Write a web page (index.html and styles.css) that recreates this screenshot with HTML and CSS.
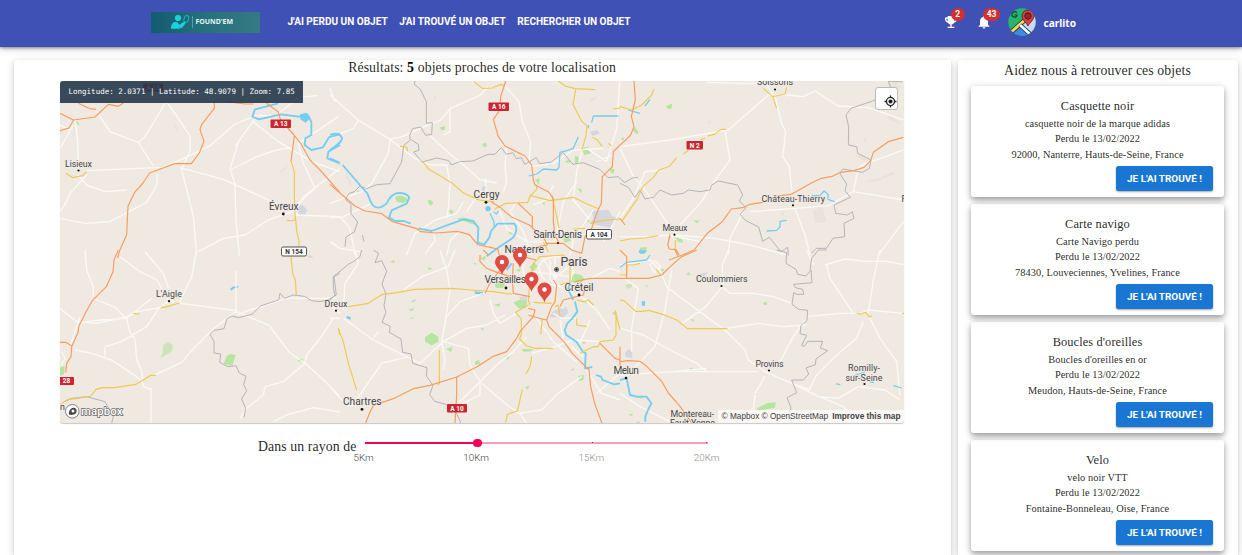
FILE: index.html
```html
<!DOCTYPE html>
<html lang="fr">
<head>
<meta charset="utf-8">
<title>Found'em</title>
<link rel="stylesheet" href="styles.css">
</head>
<body>
<header class="topbar">
  <a class="logo">
    <svg class="logo-mark" viewBox="0 0 20 16" width="20" height="16"><g fill="#19d3dc"><circle cx="8" cy="4" r="3.1"/><path d="M1 14.7C1 9 4 7.500 7 8l2.500 2.700 3.300-2.400 2.800 1-3.500 4.500H9l1.500.900z"/></g><ellipse cx="16.300" cy="5" rx="2.300" ry="3.500" transform="rotate(20 16.300 5)" fill="none" stroke="#19b5c2"/><path d="m14.800 8-2 3" stroke="#19d3dc" stroke-width="1.500"/></svg>
    <span class="logo-text">FOUND'EM</span>
  </a>
  <nav class="nav"><a>J'AI PERDU UN OBJET</a><a>J'AI TROUVÉ UN OBJET</a><a>RECHERCHER UN OBJET</a></nav>
  <div class="user">
    <span class="icon-btn"><svg viewBox="0 0 24 24" width="16" height="16" fill="#fff"><path d="M19 5h-2V3H7v2H5c-1.100 0-2 .900-2 2v1c0 2.550 1.920 4.630 4.390 4.940A5 5 0 0 0 11 15.900V19H7v2h10v-2h-4v-3.100a5 5 0 0 0 3.610-2.960C19.080 12.630 21 10.550 21 8V7c0-1.100-.900-2-2-2zM5 8V7h2v3.820C5.840 10.400 5 9.300 5 8zm14 0c0 1.300-.840 2.400-2 2.820V7h2z"/></svg><b class="badge">2</b></span>
    <span class="icon-btn bell"><svg viewBox="0 0 24 24" width="16" height="16" fill="#fff"><path d="M12 22c1.100 0 2-.900 2-2h-4c0 1.100.890 2 2 2zm6-6v-5c0-3.070-1.640-5.640-4.500-6.320V4a1.500 1.500 0 0 0-3 0v.680C7.630 5.360 6 7.920 6 11v5l-2 2v1h16v-1z"/></svg><b class="badge wide">43</b></span>
    <svg class="avatar" viewBox="0 0 28 28" width="28" height="28"><clipPath id="av"><circle cx="14" cy="14" r="13.700"/></clipPath><g clip-path="url(#av)"><path fill="#25b66d" d="M0 0h28v28H0z"/><path fill="#ced7f2" d="M28 8v20L14 16l7-5z"/><path fill="#3d8be8" d="m14 17 11 11H3z"/><path d="M1 26 18 11" stroke="#263238" stroke-width="4.600"/><path d="M1 26 18 11" stroke="#ffd65a" stroke-width="3"/><path d="m12 17 12 11" stroke="#263238" stroke-width="4.200"/><path d="m12 17 12 11" stroke="#f4f6ff" stroke-width="2.800"/><path d="M9 4.500C6 2.500 3 5 4 7.500s5 2 5-.500H6.500" fill="none" stroke="#143c35" stroke-width="1.200"/><path d="M20 18c-2-4-6-6-6-10a6 6 0 0 1 12 0c0 4-4 6-6 10z" fill="#e53b3b" stroke="#37232c" stroke-width=".8"/><circle cx="20" cy="8" r="3.200" fill="#a51f2b" stroke="#37232c"/></g></svg>
    <span class="username">carlito</span>
  </div>
</header>
<main class="page">
  <section class="panel results">
    <p class="heading">Résultats: <b>5</b> objets proches de votre localisation</p>
    <div class="map">
      <svg class="tiles" viewBox="60 81 844 342" width="844" height="342">
        <!-- parks, towns and lakes -->
        <g transform="translate(50 75) scale(.33333)"><path class="p" d="m76 138 8 3 5 10-7-3z"/><path class="t" d="m742 395 15-8 15 20-8 12h-18z"/><path class="h" d="m370 152 9-3 5 25-5-6zM690 290l20-18v8l-15 15zM65 180l10-25-3 28z"/><path class="lake" d="m750 118 20-5 12 15-15 15-16-10z"/></g>
        <g transform="translate(330 75) scale(.33333)"><path class="p" d="m330 157 15-3v10l-12 2zM457 207l10-4 4 10-10 4zM292 377l10-3 9 10-10 8zM358 404l12 3-2 12-9-6zM735 243l10 2 3 16-13 5zM755 220l20-5 8 20-20 5zM706 258l15-4v8l-12 2zM840 280l14 2-4 14-9-4zM615 315l14-6-2 20zM637 383l8-5-2 14zM742 338l14 6-3 10zM770 430l10 5-4 9zM533 473l20-3-10 9zM700 490l18-3 5 10-18 7zM80 350l6-4 4 10zM195 365c20-8 35 3 40 10l-15 10-20-5zM380 432c20-8 45-4 60 20l-40-15zM475 516l10-3v10z"/><path class="t" d="m785 408 50-4 12 20 20 4-25 30-60-12 8-20zM780 170l20-5 10 10-22 8zM455 338l12-8 4 10-13 10zM650 262l18 3-8 8z"/><path class="h" d="m780 72 20-8-3 10-18 6zM310 70l8-8-1 18zM45 295l8 5 15 35-10-8z"/><circle class="lake" cx="474" cy="401" r="8"/></g>
        <g transform="translate(620 75) scale(.33333)"><path class="p" d="m137 94 20-8-3 15-8 2zM45 156l12 18-8 3-10-10zM3 190l10-3-4 12zM220 437l19-2-8 10zM165 487l20 6 5 10-15-2zM60 518l20-2v16l-20 6z"/><path class="h" d="m800 30 25-8 20 15-10 8zM800 130l15-10 30 30zM735 320l45-10 35-20 10 8-60 22zM580 410l25-20 15 50 20-5-20 5-35 5zM700 240l30 3 15 20zM480 415l15-10-5 20zM260 140l15-5-5 15zM500 75l8 4-6 9zM730 190l8-5-2 20z"/></g>
        <g transform="translate(50 250) scale(.33333)"><path class="p" d="m530 318 13-7 14 5-10 31-26-5zM30 352l14-3-2 24-12 5zM745 325l14 3-3 8-12-3z"/><path class="p2" d="m340 286 13-11 16 10-4 20-35 20 8-15z"/><path class="t" d="m770 20 11-5 12 11-10-3z"/><path class="lake" d="m540 117 8-7 15-2 3 4-16 4-5 6z"/></g>
        <g transform="translate(330 250) scale(.33333)"><path class="p" d="m285 261 20-13 20 12v16l-20 10-20-11zM348 297l20-7-5 17zM450 236l9-3 3 9zM435 334l12-4 4 12-15 3zM522 320l16-2-4 12zM575 297h35l-8 7-22 1zM585 412l13-5-4 12zM745 378l16-3v14l-15 4zM720 363l10-9 2 5zM755 273l14 5-8 5zM720 80l15-9 18 4 10 12-10 12-30-2zM495 101l16-8 15 10-8 11-20-1zM490 165l22-5-5 10zM550 158l30-14 12 10-6 21-20-1zM598 52l15-15 10 12-13 15zM180 35l13-5v10zM293 52l15 4-10 4zM450 25l18-7-5 14zM558 60l16-6-6 12zM845 188l15-3-4 12zM760 150l14 2-6 10zM240 155l18-8-5 9zM234 179l20-5-8 9zM238 205l18-4-13 6zM430 40l8-2v8z"/><path class="t" d="m668 185 20-12 12 5 8-10 7 20-17 15-40-2zM568 141l22-3 2 12-20 2z"/><path class="pink" d="m650 254 7-2v10zM540 478l14 4-12 2z"/><path class="lake" d="m50 197 13 5-2 8-11-5zM433 124l30 3-6 9-22-5z"/></g>
        <g transform="translate(620 250) scale(.33333)"><path class="p" d="m197 73 10-6 6 9zM430 158l9-3 3 9-10 1zM212 209l9-2v8zM207 356l10-3v10zM412 475l30-16 26-2-4 17-50 8zM115 60l18-4-5 10zM45 442l30-4-10 8zM25 493l15-2-5 8zM48 517l11-3v10z"/><path class="p2" d="m15 104 20-3 2 10-15 6zM75 107l10-3-3 9z"/><path class="t" d="m240 71 25-4-14 14zM15 307l12-10 10 10v18l-20-5z"/><path class="lake" d="m58 0 22 2-8 10-16-4zM65 154h10v13H66z"/></g>
        <!-- minor roads -->
        <g class="w" transform="translate(50 75) scale(.33333)"><path d="m75 135 8 60 2 88M30 220l40-70M110 287l230-10 80-35 60-30 75-65 62-25 60 0 70-55 55-5M110 300l-50 55-10 25-20 30M85 300l25 30 55 20 65-5M30 430l75 15 75-5 110-58 30-50 3-35M140 110l40 60 85 33 20-18 50-83 10-18M265 203l45 70M352 83l35 50 33 50v45l-25 55 35 140 10 117M390 278l130 35 110 50 115 55M615 132l-48 65-27 85 15 45 3 110 10 105M540 285l80-40 60-20 45-8M610 140l75 60 100 60 85 30M745 205l15 60 35 75-55 50M870 280l-110 85-20 40-85 30-70 45-65 10-75 40M735 420l135 5M30 150l30 15M745 205l120-80M570 195l-15 20"/></g>
        <g class="w" transform="translate(330 75) scale(.33333)"><path d="m0 60 85 75 90 55 80 60 45 20M0 40l15 40M85 135l-15 25-70 30M177 193l40-8 65-30 50-20 30-35 90-40 20-25M300 182l60 55 40 32 50 45 50 10M360 100v70l-20 10M180 195l-5 40-50 90-30 25-95 35M300 270h50l10 55-5 75-5 30M527 35l40 45 10 60 25 60-5 60M600 275l70-10 60-40 90-5M530 215l-5 60 5 45-10 30M400 380l-20 35-65 20-60 40-25 65M0 427l35 0 85-40M30 425l30 35 15 80M410 410l40-60 35 5M490 385l-20-30-5-45M560 380l-20 30 40 60 25 70M740 320l-40 60-25 120M790 405l-60 90-10 45M800 260l50-20M870 10l-10 150-30 100-60-40M755 230l-15 60-10 85 50 60M0 500l30 20 60 10M310 467l5 30-30 40M390 467l-30 30-10 45M510 410l20 50 60 40 80 0M670 330l-20 45-40 15M820 500l50-90"/></g>
        <g class="w" transform="translate(620 75) scale(.33333)"><path d="m0 215 150-20 175-30 120-105 55 0 50 5 35-17 70 45 90 5 100 35 50 5M260 22l180 5 20 35M465 65l20 80 12 25-9 75 20 30 8 75M315 165l15 90-55 75-30 50-65 70-15 30M0 220l38 80 40 50 85 125M165 480l120 10 105 20 110 30M370 410l-40 80-5 50M390 410l135-10 100-8 75-42 152 25M525 400l30 80 15 60M700 350l15-70 20-15 40-12 75-28M850 440l-60 80-15 20M0 430l40-60 35-80 45-5M0 485l90 0 60-5 90 20"/></g>
        <g class="w" transform="translate(50 250) scale(.33333)"><path d="m105 0 5 60 20 50v30M30 175l50 40 60 5 85-18 40-18 60-10 30-20M110 215l45-5 75-5 75-60M440 0l-15 80-38 80M390 160l170 22-70 55-70 70-25 30-85 40M558 183l0-120M210 20l60 45 50 25 35 60M285 5l55 65 30 90M553 182l105 45 60 80 50 35 50 45 50 50M850 205l-40 60-40 50-5 25-65 55-55 15-5 25-50 40-20 30M330 170l-40 60-75 45-50 15v35M75 300l50 10 60 20 60 40 28 20 10 22 20 5v103M255 268l5 60 15 35 3 25M135 147l60 25 35 35 10 40 15 20M35 305l10 20-10 20M60 290l30-90M670 515l40-20 80-22 80 13M600 180l110-35h150M560 195l50-20M870 190l-20-20"/></g>
        <g class="w" transform="translate(330 250) scale(.33333)"><path d="m40 180 5-80 40-60-10-40M40 205l90 65 100 50 40 20 70-65 70-40 60-10 55-30M130 265l15-20M0 410l35 40 30 20 90-130 80-20M330 0l20 60 10 60-15 100-10 55 10 55-5 30M375 0l-20 50-80 30-55 40M345 205l45-50 70-25 20-20M340 275l75 20 5 50 30 50 50-50 50-40 40-45M450 395l-65 65-25 15M455 400l70 60 40 30 70-10 50-50 70-50M450 395l0 40-70 35M570 490l30 45M605 310l70-20 55-20 90 5M620 205l50 70 70 60M0 205l30 0M690 210l10 60 60 50M560 190l-50 30-20-30-10-40M740 205l-45 0-25-15M605 0l-30 30 10 60 20 40M780 85l60-30 30 10M660 30l0 60 40 25 80 40M780 210l-30 70M770 360l45 70 55 20M800 430l70-60M740 130l60 50 40 60"/><path d="m625 50 15-20 35-12 40 10 15 35-10 35-35 12-35-12-18-25z"/><path d="M640 25l35 60 60-50M610 65l110 15M675 15v95"/></g>
        <g class="w" transform="translate(620 250) scale(.33333)"><path d="m0 45 90-15 30 30 20 50 85 65 90 65 60 60 10 30 50 35 80 35 55 20M325 0l-18 45v65l-50 60-70 50M310 115l20 15 70 0 60 10 55 20M560 200l100-10 60 0 25-10 105 10M320 235l95-15 75 10 70-5M555 210l-35 50-40 75M730 215l-20 50-60 50-60 60-25 50-70-35M565 425l30 15 60 5 60-35 80 10 45 30M750 205l30 60 50 70 10 100M620 45l10 40 70 105M615 45l60-18 65 7 60 0 50 10M780 0l-20 90-15 100M0 375l160-10 250 0M160 365l100-10M0 235l70 20 80 45 80 40 30 25M155 60l-20 120-30 110-60 60M5 80l50 35-20 120 0 70M560 0l20 45M405 430l30-50M400 480l5-45M90 45l15-13 17 18-20 18zM0 430l60 40 100 50M600 440l70 30 40 40"/></g>
        <!-- department borders -->
        <g class="b" transform="translate(330 75) scale(.33333)"><path d="m255 18-2 10 18 15 18 37v65l18-2-2 35-18 3-15-25-24 5-9 20 2 15-20 15-6 50-35 65-40 3-30 12-20-8-17 17-15 5-12 18 17 15v28l20 25-10 30-25 15-3 29m57-15-5-20M245 195l20 13 2 18-16 5 25 30 45-12 35 8 8 13 25-10 40-2 45-20h20l20-20 15 20 20-5 10 18 15-3 10 20 35-20 10 18 35-5 35-28 30 35 30-5 50 20 25 25 30-3 20 18 25-15 15 0"/></g>
        <g class="b" transform="translate(620 75) scale(.33333)"><path d="m0 325 25 12 20 30 15-22 15 27 25-5 20-22 35 15 35-5 15-10 35 5 30-5 5-15 20-12 58 12 15 30-10 18 20 20-17 20 15 18 40 20 12 43 20-12 35 43 20-13 2 25M850 20l-45 0 8 20-15 20-45 20-60 20-15 20 8 35-1 55 25 5 3 20 40 20-5 25-20 12-60-10-8 15 20 30-5 20 16 20-49 23 5 25 35 5 15-10 5 20-30 15 2 40-35 5-20 30h-30l-15 15"/></g>
        <g class="b" transform="translate(50 250) scale(.33333)"><path d="M870 70l-18 10 7 55-25 15-25 5-25-3-20-13-35-4-25 10-14-15-4 20-55 18-25 25-40 10-20-5-15 8-9 30-30 5-12 13 12 20v35l20 3-3 25 25 13 24-3 10 22 20 10-7 25 9 18-15 25 12 28-5 27M45 455l20-10 45-5 55 15 25 45-5 20"/></g>
        <g class="b" transform="translate(330 250) scale(.33333)"><path d="m130 0 16 10-11 28 20-6 15 32-14 38 12 30-6 35 6 20-12 30 25 12-3 18 35 20 5 40 25 5 5 28 43 13-2 25 20 28-10 28 15 20 30 8 30 15 17 38 2 30M95 0l-5 20-20 15-15 8-45 37 0 35 5 20-20 20"/></g>
        <g class="b" transform="translate(620 250) scale(.33333)"><path d="m470 0 30 8-2 32 30 18 5 15 25 5 15-18 3 38-55 5 5 10 22 5 3 15-20 0-10-5-5 35 20 15 27 3-2 30-18 15-3 25 20 5-15 30 8 3 10-15h45l-7 20 22 8-35 25-2 17-28 10 8 18-16 18h-35l15 38-29 15 12 30-8 25 10 20M620 0h-25l-20 25-5 35"/></g>
        <!-- water -->
        <g class="r" transform="translate(50 75) scale(.33333)"><path d="m685 85-70 18-8 22 20 8 65-15 55 7 25-5 12 20v40l-18 10-2 20 20 15 35-8 18-30 33-10M870 210l-35 20-3 20 38 15"/></g>
        <g class="r" transform="translate(330 75) scale(.33333)"><path d="M0 180c15-6 32-6 36 10 0 12-15 20-36 35M0 250l27 12M38 270l54 63 20 22 10 25c15 30 35 16 48 5 10-20 20-31 36-31 15 0 28 5 32 14l-8 18-45 20-8 22 20 10h25l20 8M265 460l40 8 95-35 30 5 15 20-2 45 20 5 15-20 5-20 20-22 50 0c12 15 5 30-5 43l-45 30-33 25"/><path class="thin" d="M480 415l12 25v15M490 410l10 7 5-10M865 123h-75l-5 20M775 150v10M745 185l-15 35-20 7-20 5-3 45-7 8-40-3-20 15-24 6"/></g>
        <g class="r thin" transform="translate(620 75) scale(.33333)"><path d="m75 93 15-20M25 105l35 10M575 362h25l12-14 12 10v15l20 7M500 436l-20 3v17l-10 10-30 2"/></g>
        <g class="r" transform="translate(330 250) scale(.33333)"><path d="m735 155 7 30-15 20-15 15-8 20 5 15 30 20 20 30 8 5-2 45 22-4M798 375l15 5 5 10 35 13 17-3M730 150l-15-30 5-25M545 40l-15 20"/></g>
        <g class="r" transform="translate(620 250) scale(.33333)"><path class="thin" d="M0 52l20-15 60-7 10-15"/><path d="M0 390l20-5 10 50 20 5 30 0 14 20-10 20-8 20v15"/><path class="thin" d="m648 402 13 2M700 378l35-12M750 396l12 2M820 407l25 7"/></g>
        <!-- secondary roads -->
        <g class="y" transform="translate(50 75) scale(.33333)"><path d="m48 295 20 13 30-6 12-12M723 258l10 32v70l3 75-15 3-10-2M736 425l5 50 6 20v25"/></g>
        <g class="y" transform="translate(330 75) scale(.33333)"><path d="m432 20 25 20 30-1 22-10 15 2M685 18l20 15 30 8 60 3M737 43l-8 45 15 30 12 22 15 12-3 30-12 42M787 187l15 8 15 20M835 205l10 8M850 102l20-3M210 214l20 2 3 13M277 258l20 25 70 42 35 30 45 20 45 5M493 403l35-18 65-3 8-20 60 15 70-10 40 20 35 14M600 362l20-18v-15M665 360l12 50 10 50M730 462l35-2M780 445l35-8 55-5M640 500l15 30"/></g>
        <g class="y" transform="translate(620 75) scale(.33333)"><path d="m0 95 35 10 30-15 30-30 7-18M430 40l28 25 37-8 5-20M458 65l12 35M318 163l-15 0-20 15-20 5M255 190l-13 4M205 225l-15 13M170 248l-22 26-33 12-15 22-32 27-15 35L5 440M0 498l30-6 45-3 40-7M150 475l-3 15M166 495v30"/></g>
        <g class="y" transform="translate(50 250) scale(.33333)"><path d="m333 172 10 0 45-13M250 190l18 2M318 376l-15 0-45 27-65 10-35 0-20 5-15 20-45 8-23 2-25 15M723 20l5 50 8 20 3 47M865 235l5 20"/></g>
        <g class="y" transform="translate(330 250) scale(.33333)"><path d="m55 170 60-10 40-26 45-6 55-10 110-3 60 5 65 5 55 8M25 235l15 40 15 65 25 80M328 300v100l-5 5M600 165l-5-15 5-60 10-50 20-20 70-5 20 20v60l-30 10M610 157l55 3M595 165l-38 22 17 20v45l-5 15 20 20 25 8h55M637 205l-5 48M605 320l-5 30-12 22M577 418l-15 65-30 10-5 25M870 240l-15-60M675 170l10-5 5 35M740 150l20 5 15-5 15 15M740 205v20l30 5M750 310l40-20h15l5-15 40-5 8-15 0-70"/></g>
        <g class="y" transform="translate(620 250) scale(.33333)"><path d="m0 150 12 2 35 32h20l20-3 40 12 45 18 30 25h120M710 190l12 2 15-5 10 12h9M846 190h6M0 75h20V45h20l20-5M108 58l15 18"/></g>
        <!-- motorways -->
        <g class="o" transform="translate(50 75) scale(.33333)"><path d="m30 115 40 20 65-9 40-38 30 6 15-10M30 167l27-8 14-24M85 85l35 16 18 2M493 80v20l-38 48-5 16 12 35-14 35-24 32h-50l-75 28-20 30-25 28-20 42-4 85-20 45-7 25M530 80l55 7h25M650 85l34 25 8 25 40 45 20 25 28 50 33 33 57 65M733 183l-10 75"/></g>
        <g class="o" transform="translate(330 75) scale(.33333)"><path d="m527 18-15 47-2 40-20 28 15 52 20 28 60 30 20 27 5 45 5 15 40 20 15 20 0 70 5 40 10 20M0 328l75 65 30 15 48 7 35 25 70 20 15 10 45 4 65-5 35 10 25 30 60 13 5 18M483 380l25 15 35 30 55 25 10 8M565 385l42 40v35l30 20 15 30-28 5-60 25M870 210l-20 20-3 45-30 30-3 80-12 25-17 50-20 25-10 50M650 505h50l25 20 30 10"/></g>
        <g class="o" transform="translate(620 75) scale(.33333)"><path d="m42 18 4 57-12 50 8 30-10 25-20 20-12 10M850 187l-45 13-45 32-8 25-20 20-30 10-40 5-25 12-33 6-30 14-60 34-45 5-45 20-35 5-20 10-35 4-27 38-45 35-40 50-35 15-40 15M150 480l-7 30 5 12 20 2 10 16M0 430l15 20"/></g>
        <g class="o" transform="translate(50 250) scale(.33333)"><path d="m205 0-13 30-3 35-20 45-42 42-17 30-23 45-3 20-19 43-2 30-13 20-3 28M30 277h17l20 12"/></g>
        <g class="o" transform="translate(330 250) scale(.33333)"><path d="m107 519 12-30 11-23 60-20 60-30 50-10 80-25 60-30 50-32 40-14 30-40 10-20 40-45 5-20-20-5M380 380l0 55-5 85M595 195l40 12 15 3 15-40 10-15 5-50-10-15M450 15v20l20 20 25 10 45 15 45 5M550 40l-3 50 3 40 50 10M510 60l-30 40-15 30M650 210l7 20 45 45 25 35 50 50 5 50 12 50 22 60M690 170l10-20 40-10 20-5 5-20M735 95l45-10 90 0M810 280l30 30 15 15 15 5M460 0l15 15M590 0l-12 20 40 10"/></g>
        <g class="o" transform="translate(620 250) scale(.33333)"><path d="m0 85h85l40-10 20-20 40-35 45-20M165 0l10 20M0 0l20 20v65M0 335l25-3 35 2 20 15 45 45 20 35 35 40 35 50M0 290v60"/></g>
        <!-- road shields -->
        <g class="shield red"><rect x="270.500" y="119.500" width="20.500" height="8.500" rx="1"/><text x="280.700" y="126.200">A 13</text><rect x="488.500" y="102.500" width="20.500" height="8.500" rx="1"/><text x="498.700" y="109.300">A 16</text><rect x="686.500" y="141" width="16.500" height="8.500" rx="1"/><text x="694.700" y="147.700">N 2</text><rect x="447" y="404" width="20" height="8.500" rx="1"/><text x="457" y="410.700">A 10</text><rect x="53" y="377" width="21" height="8" rx="1"/><text x="66.500" y="383.300">28</text><rect x="143" y="83.500" width="20" height="8" rx="1"/><text x="153" y="89.800">A 13</text></g>
        <g class="shield white"><rect x="281.500" y="247" width="25" height="9" rx="1.500"/><text x="294" y="254">N 154</text><rect x="586.500" y="229.500" width="25" height="9.500" rx="1.500"/><text x="599" y="236.700">A 104</text></g>
        <!-- places -->
        <g class="dots"><circle cx="78.500" cy="170.500" r="1.100"/><circle cx="283.300" cy="214" r="1.400"/><circle cx="486" cy="202.300" r="1.400"/><circle cx="558" cy="243" r="1.100"/><circle cx="775" cy="89.500" r="1.100"/><circle cx="793" cy="205.300" r="1.100"/><circle cx="674.500" cy="234.700" r="1.100"/><circle cx="169" cy="301.200" r="1.100"/><circle cx="336" cy="310.700" r="1.100"/><circle cx="506" cy="288" r="1.400"/><circle cx="579" cy="295" r="1.400"/><circle cx="362" cy="409.300" r="1.400"/><circle cx="721.500" cy="286" r="1.100"/><circle cx="626" cy="378" r="1.300"/><circle cx="769" cy="370.500" r="1.100"/><circle cx="864.500" cy="384" r="1.100"/><circle cx="556.500" cy="269.500" r="1.200"/><circle class="ring" cx="556.500" cy="269.500" r="2.100"/></g>
        <g class="place"><text x="65" y="166.500" textLength="27">Lisieux</text><text x="757" y="85" textLength="36">Soissons</text><text x="761.500" y="201.500" textLength="63.500">Château-Thierry</text><text x="662.500" y="231" textLength="25">Meaux</text><text x="156" y="297" textLength="26">L'Aigle</text><text x="324.500" y="307" textLength="23">Dreux</text><text x="696" y="282" textLength="51.500">Coulommiers</text><text x="755.500" y="366.500" textLength="28">Provins</text><text x="848" y="371" textLength="32">Romilly-</text><text x="845.500" y="380.500" textLength="37">sur-Seine</text><text x="670.500" y="417" textLength="43.500">Montereau-</text><text x="670" y="426" textLength="45">Fault-Yonne</text><text x="901.500" y="201.500">R</text><text x="60" y="410">n</text></g>
        <g class="place city"><text x="533.500" y="238.300" textLength="48.500">Saint-Denis</text><text x="269" y="209.500" textLength="29.500">Évreux</text><text x="473.500" y="198" textLength="26">Cergy</text><text x="504.500" y="253" textLength="39.500">Nanterre</text><text x="484.500" y="283" textLength="41.500">Versailles</text><text x="564.500" y="290.500" textLength="29">Créteil</text><text x="343" y="405" textLength="38.500">Chartres</text><text x="613.500" y="373.500" textLength="25.500">Melun</text></g>
        <g class="place capital"><text x="560.500" y="266" textLength="27">Paris</text></g>
        <g class="pins"><g transform="translate(520 268)"><path d="M0 0C-1-5-7-8-7-13a7 7 0 0 1 14 0C7-8 1-5 0 0z"/><circle cy="-13" r="2.700"/></g><g transform="translate(502 275)"><path d="M0 0C-1-5-7-8-7-13a7 7 0 0 1 14 0C7-8 1-5 0 0z"/><circle cy="-13" r="2.700"/></g><g transform="translate(531.500 292)"><path d="M0 0C-1-5-7-8-7-13a7 7 0 0 1 14 0C7-8 1-5 0 0z"/><circle cy="-13" r="2.700"/></g><g transform="translate(544.500 302.500)"><path d="M0 0C-1-5-7-8-7-13a7 7 0 0 1 14 0C7-8 1-5 0 0z"/><circle cy="-13" r="2.700"/></g></g>
        <g class="mapbox"><circle cx="72.300" cy="411.300" r="6.800"/><path d="M69 414.600c-1-7 7-9.300 7.600-4 .300 4-4 5-7.600 4z" fill="#444"/><circle class="hole" cx="73" cy="410.900" r="1.500"/><text x="81" y="414.500" textLength="41.500">mapbox</text></g>
      </svg>
      <div class="coords">Longitude: 2.0371 | Latitude: 48.9079 | Zoom: 7.85</div>
      <button class="locate" aria-label="Localiser"><svg viewBox="0 0 24 24" width="13" height="13"><path fill="none" stroke="#222" stroke-width="2.400" d="M12 4.500a7.500 7.500 0 1 0 0 15 7.500 7.500 0 0 0 0-15zM12 1v4M12 19v4M1 12h4M19 12h4"/><circle cx="12" cy="12" r="3.800" fill="#222"/></svg></button>
      <div class="credits"><span>© Mapbox © OpenStreetMap</span><b>Improve this map</b></div>
    </div>
    <div class="radius">
      <span class="radius-label">Dans un rayon de</span>
      <div class="slider">
        <div class="rail"><i class="fill"></i><i class="thumb"></i><i class="tick mid"></i><i class="tick end"></i></div>
        <div class="marks"><span class="on">5Km</span><span class="on">10Km</span><span>15Km</span><span>20Km</span></div>
      </div>
    </div>
  </section>
  <aside class="panel lost">
    <h2 class="lost-title">Aidez nous à retrouver ces objets</h2>
    <article class="card"><h3>Casquette noir</h3><p>casquette noir de la marque adidas</p><p>Perdu le 13/02/2022</p><p>92000, Nanterre, Hauts-de-Seine, France</p><button class="found">JE L'AI TROUVÉ !</button></article>
    <article class="card"><h3>Carte navigo</h3><p>Carte Navigo perdu</p><p>Perdu le 13/02/2022</p><p>78430, Louveciennes, Yvelines, France</p><button class="found">JE L'AI TROUVÉ !</button></article>
    <article class="card"><h3>Boucles d'oreilles</h3><p>Boucles d'oreilles en or</p><p>Perdu le 13/02/2022</p><p>Meudon, Hauts-de-Seine, France</p><button class="found">JE L'AI TROUVÉ !</button></article>
    <article class="card"><h3>Velo</h3><p>velo noir VTT</p><p>Perdu le 13/02/2022</p><p>Fontaine-Bonneleau, Oise, France</p><button class="found">JE L'AI TROUVÉ !</button></article>
  </aside>
</main>
</body>
</html>
```

FILE: styles.css
```css
* { box-sizing: border-box; }
body { margin: 0; height: 555px; overflow: hidden; background: #fff; color: rgba(0,0,0,.87); font-family: "Liberation Serif", serif; display: flex; flex-direction: column; }
p, h2, h3 { margin: 0; font-weight: 400; }

.topbar { position: relative; z-index: 2; height: 46.5px; flex: none; background: #3f51b5; color: #fff; display: flex; align-items: center; padding: 0 166px 2px 151px; box-shadow: 0 1px 3px rgba(0,0,0,.4), 0 3px 7px rgba(0,0,0,.14); }
.logo { width: 109px; height: 21px; display: flex; align-items: center; padding-left: 19px; background: linear-gradient(90deg, #135b6f, #25727c 50%, #357a81); }
.logo-text { margin-left: 2px; padding-left: 2.500px; border-left: 1px solid #5f9ca8; font: 700 6.950px/12px "Noto Sans", sans-serif; color: #e8f4f5; white-space: nowrap; }
.nav { display: flex; gap: 11.500px; margin-left: 27.500px; font: 700 10.050px/16px Roboto, sans-serif; white-space: nowrap; }
.user { margin-left: auto; display: flex; align-items: center; }
.icon-btn { position: relative; width: 16px; height: 16px; display: block; }
.bell { margin-left: 17px; }
.icon-btn svg { display: block; }
.badge { position: absolute; left: 8.500px; top: -6.500px; width: 13.500px; height: 13.500px; border-radius: 7px; background: #d32f2f; font: 700 8.500px/13.500px Roboto, sans-serif; text-align: center; }
.badge.wide { left: 7.500px; width: 17px; }
.avatar { margin-left: 16px; }
.username { margin: 2px 0 0 8px; font: 700 10.1px/16px "Noto Sans", sans-serif; }

.page { flex: 1; min-height: 0; display: flex; gap: 7px; padding: 13.500px 4px 0 14px; }
.panel { border-radius: 3px 3px 0 0; background: #fff; box-shadow: 0 2px 3px rgba(0,0,0,.12), 0 2px 8px rgba(0,0,0,.16); }
.results { width: 937px; padding: 0 47px 0 46px; }
.heading { height: 21px; text-align: center; font-size: 13.8px; line-height: 16px; letter-spacing: .1px; }
.heading b { color: #000; }

.map { position: relative; height: 342px; border-radius: 3px; overflow: hidden; background: #efe9e1; box-shadow: 0 1px 1px #c8c8c8; }
.tiles { display: block; }
.w, .o, .y, .b, .r { fill: none; stroke-linejoin: round; stroke-linecap: butt; }
.w { stroke: #fbf9f6; stroke-width: 4; }
.o { stroke: #f79c5e; stroke-width: 3.500; }
.y { stroke: #edca50; stroke-width: 3.400; }
.b { stroke: #b4b4b8; stroke-width: 3; }
.r { stroke: #74cdf2; stroke-width: 5.500; }
.thin { stroke-width: 3.800; }
.p { fill: #b5e5a0; }
.p2 { fill: #cde4bb; }
.t { fill: #d5d6e0; }
.h { fill: #e9e2d9; }
.pink { fill: #ecd5e0; }
.lake { fill: #74cdf2; }
.shield { font: 700 6.5px Roboto, sans-serif; text-anchor: middle; }
.red rect { fill: #cb2630; }
.red text { fill: #fff; }
.white rect { fill: #fff; stroke: #555; }
.white text { fill: #333; }
.dots { fill: #111; }
.ring { fill: none; stroke: #222; stroke-width: .7; }
.place { font: 400 8.900px Roboto, sans-serif; fill: #43464c; stroke: #efe9e1; stroke-width: 1.200px; paint-order: stroke; }
.city { font-size: 10.200px; }
.capital { font-size: 12.200px; }
.pins path { fill: #e04b42; }
.pins circle { fill: #fff; stroke: #b33832; stroke-width: .7; }
.mapbox circle { fill: #fff; stroke: #666; stroke-width: .8; }
.mapbox .hole { stroke: none; }
.mapbox text { font: 500 11.500px Roboto, sans-serif; fill: #fff; stroke: #666; stroke-width: 1.400px; paint-order: stroke; }
.coords { position: absolute; left: 0; top: 0; width: 242.500px; height: 22px; padding-left: 8.500px; background: rgba(35,55,75,.9); color: #fff; font: 7.52px/22px "DejaVu Sans Mono", monospace; white-space: nowrap; }
.locate { position: absolute; left: 815px; top: 5.500px; width: 23px; height: 23px; padding: 7px 0 0 8px; border: 1px solid #bbb; border-radius: 3px; background: #fff; }
.locate svg { display: block; }
.credits { position: absolute; right: 0; bottom: 0; height: 13px; padding: 0 3.500px; display: flex; gap: 4px; background: rgba(255,255,255,.65); color: #404040; font: 8.250px/13px "Liberation Sans", sans-serif; white-space: nowrap; }

.radius { display: flex; margin: 14px 0 0 198px; }
.radius-label { width: 106.500px; padding-top: 1px; font-size: 13.8px; line-height: 17px; letter-spacing: .1px; white-space: nowrap; }
.slider { width: 343px; padding-top: 5px; }
.rail { position: relative; height: 1.500px; background: #fa9abc; }
.fill { position: absolute; left: 0; top: 0; width: 33.3%; height: 100%; background: #f50057; }
.thumb { position: absolute; left: 108.500px; top: -3.500px; width: 8.500px; height: 8.500px; border-radius: 50%; background: #f50057; }
.tick { position: absolute; top: 0; width: 1px; height: 1px; background: #c51162; }
.mid { left: 227.500px; }
.end { left: 341.500px; }
.marks { display: flex; justify-content: space-between; margin: 7.500px -12px 0 -11px; font: 300 9.800px/13px Roboto, sans-serif; color: #8f8f8f; }
.marks .on { color: #444; }

.lost { width: 280px; padding: 0 14px 0 13px; }
.lost-title { height: 26px; text-align: center; font-size: 13.8px; line-height: 21px; letter-spacing: .1px; }
.card { height: 111px; margin-bottom: 7px; padding: 12px 11px 0; border-radius: 3px; text-align: center; box-shadow: 0 3px 5px rgba(0,0,0,.26), 0 2px 10px rgba(0,0,0,.18); }
.card h3 { font-size: 12.4px; line-height: 16px; margin-bottom: 1.500px; letter-spacing: .1px; }
.card p { font-size: 10.35px; line-height: 15.500px; letter-spacing: .07px; white-space: nowrap; }
.found { display: block; margin: 3.500px 0 0 auto; width: 97px; height: 25px; padding: 0; border: 0; border-radius: 2.500px; background: #1976d2; color: #fff; font: 700 9.950px/25px Roboto, sans-serif; white-space: nowrap; box-shadow: 0 1px 2px rgba(0,0,0,.35); }
```
